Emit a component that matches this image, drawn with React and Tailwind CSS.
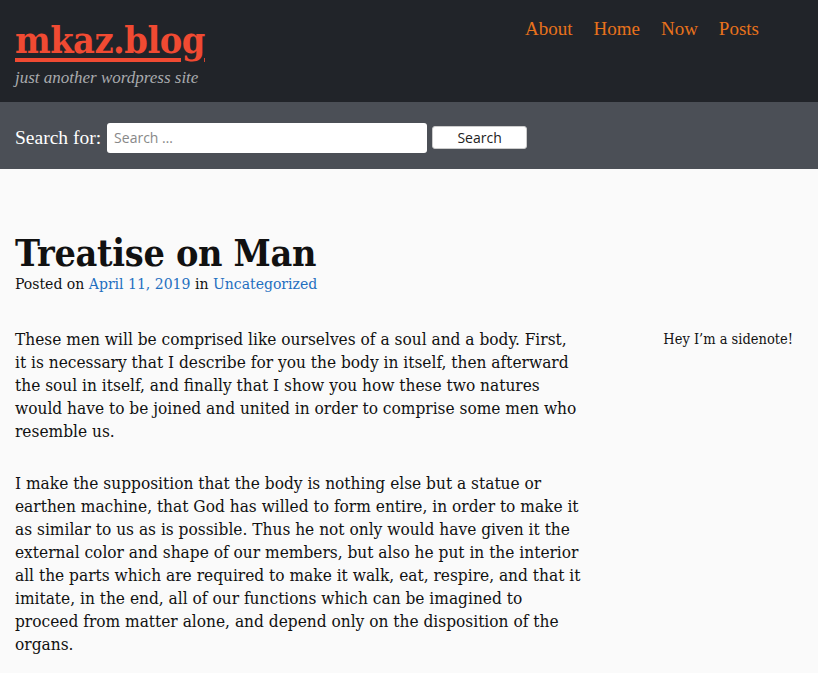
import React from 'react';

const body = "font-['DejaVu_Serif_Condensed','DejaVu_Serif',serif]";
const slab = "font-['DejaVu_Serif_Condensed','DejaVu_Serif',serif]";

const App = () => {
  return (
    <div className={`min-h-[673px] bg-[#fafafa] ${body} text-[#111]`}>
      <header className="bg-[#212429] h-[102px] flex justify-between px-[15px]">
        <div className="pt-[18px]">
          <a href="#" className={`block text-[#f04a32] text-[37.5px] leading-[44px] font-bold ${slab} underline decoration-[4px] underline-offset-[5px] tracking-[-0.5px]`}>
            mkaz.blog
          </a>
          <p className="mt-[3px] italic text-[17px] text-[#a9abae] font-['Liberation_Serif',serif]">just another wordpress site</p>
        </div>
        <nav className="flex gap-[21px] pt-[15px] pr-[44px] text-[19px] text-[#e8721c] font-['Liberation_Serif',serif]">
          <a href="#">About</a>
          <a href="#">Home</a>
          <a href="#">Now</a>
          <a href="#">Posts</a>
        </nav>
      </header>

      <div className="bg-[#4b4f56] h-[67px] flex items-center px-[15px] pt-[4px] gap-[6px]">
        <label className="text-[19.5px] text-white font-['Liberation_Serif',serif]">Search for:</label>
        <input
          type="text"
          placeholder="Search …"
          className="w-[320px] h-[30px] rounded-[3px] bg-white px-[7px] text-[14px] font-['Open_Sans',sans-serif] placeholder-[#888] outline-none"
        />
        <button className="ml-[-1px] w-[95px] h-[23px] rounded-[3px] bg-white border border-[#ccc] text-[14px] font-['Open_Sans',sans-serif] text-[#222]">
          Search
        </button>
      </div>

      <main className="px-[15px] pt-[62px]">
        <h1 className={`text-[37.4px] leading-[44px] font-bold ${slab} tracking-[-0.3px]`}>Treatise on Man</h1>
        <p className="text-[15.6px] mt-[-2px]">
          Posted on <a href="#" className="text-[#1f6fc0]">April 11, 2019</a> in{' '}
          <a href="#" className="text-[#1f6fc0]">Uncategorized</a>
        </p>

        <div className="flex mt-[32px]">
          <div className="w-[567px] shrink-0 text-[17.15px] leading-[23px]">
            <p>
              These men will be comprised like ourselves of a soul and a body. First, it is necessary that I describe for you the body in itself, then afterward the soul in itself, and finally that I show you how these two natures would have to be joined and united in order to comprise some men who resemble us.
            </p>
            <p className="mt-[29px]">
              I make the supposition that the body is nothing else but a statue or earthen machine, that God has willed to form entire, in order to make it as similar to us as is possible. Thus he not only would have given it the external color and shape of our members, but also he put in the interior all the parts which are required to make it walk, eat, respire, and that it imitate, in the end, all of our functions which can be imagined to proceed from matter alone, and depend only on the disposition of the organs.
            </p>
          </div>
          <aside className="flex-1 text-right text-[14.5px] pr-[10px] pt-[1px]">Hey I’m a sidenote!</aside>
        </div>
      </main>
    </div>
  );
};

export default App;
